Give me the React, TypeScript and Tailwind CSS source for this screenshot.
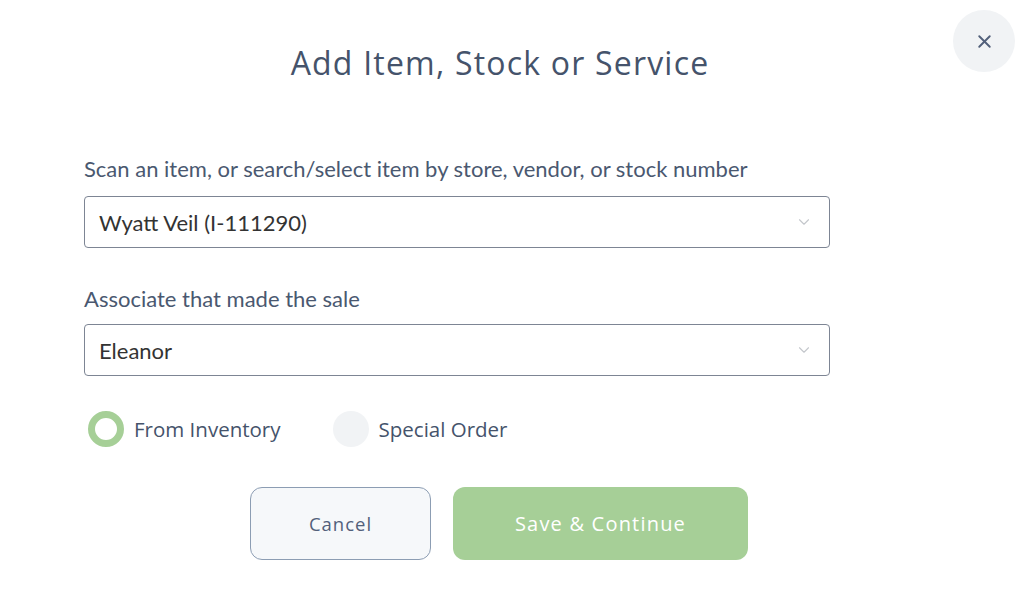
import { X, ChevronDown } from "lucide-react";

function Select({ value }: { value: string }) {
  return (
    <div className="flex h-[52px] w-[746px] items-center justify-between rounded-[4px] border border-[#7d8594] bg-white pl-[14px] pr-[16px]">
      <span className="font-['Lato'] text-[22px] text-[#333333]">{value}</span>
      <ChevronDown className="h-[18px] w-[18px] text-[#c4c7cc]" strokeWidth={1.5} />
    </div>
  );
}

export default function App() {
  return (
    <div className="relative h-[598px] w-[1024px] overflow-hidden bg-white font-['Nunito','Lato',sans-serif] text-[#45536b]">
      <button className="absolute left-[953px] top-[10px] flex h-[62px] w-[62px] items-center justify-center rounded-full bg-[#f1f3f5]">
        <X className="h-[21px] w-[21px] text-[#52607a]" strokeWidth={2.2} />
      </button>

      <h1 className="pr-[24px] pt-[42px] text-center font-['Open_Sans'] text-[32px] leading-[42px] tracking-[1.2px] text-[#45536b]">
        Add Item, Stock or Service
      </h1>

      <div className="flex flex-col pl-[84px] pt-[72px]">
        <label className="font-['Lato'] text-[22px] leading-[26px] text-[#4a5870]">
          Scan an item, or search/select item by store, vendor, or stock number
        </label>
        <div className="mt-[14px]">
          <Select value="Wyatt Veil (I-111290)" />
        </div>

        <label className="mt-[38px] font-['Lato'] text-[22px] leading-[26px] text-[#4a5870]">
          Associate that made the sale
        </label>
        <div className="mt-[12px]">
          <Select value="Eleanor" />
        </div>

        <div className="mt-[35px] flex items-center pl-[4px]">
          <span className="h-[36px] w-[36px] rounded-full border-[7px] border-[#a6cf97] bg-white" />
          <span className="ml-[10px] font-['Open_Sans'] text-[20.5px] text-[#45536b]">From Inventory</span>
          <span className="ml-[52px] h-[36px] w-[36px] rounded-full bg-[#f1f3f5]" />
          <span className="ml-[10px] font-['Open_Sans'] text-[20.5px] text-[#45536b]">Special Order</span>
        </div>
      </div>

      <div className="mt-[40px] flex gap-[22px] pl-[250px]">
        <button className="h-[73px] w-[181px] rounded-[12px] border border-[#8c9db3] bg-[#f6f8fa] font-['Open_Sans'] text-[18.5px] font-medium tracking-[1px] text-[#52607a]">
          Cancel
        </button>
        <button className="h-[73px] w-[295px] rounded-[12px] bg-[#a6cf97] font-['Open_Sans'] text-[20px] tracking-[1.2px] text-white">
          Save &amp; Continue
        </button>
      </div>
    </div>
  );
}
